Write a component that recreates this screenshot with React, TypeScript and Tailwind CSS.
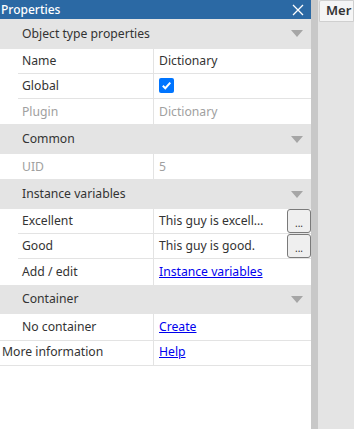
import React from 'react';

const Triangle = () => (
  <svg width="12" height="7" viewBox="0 0 12 7" className="shrink-0">
    <path d="M0 0 H12 L6 7 Z" fill="#a6a6a6" />
  </svg>
);

const Header: React.FC<{ title: string }> = ({ title }) => (
  <div className="flex h-[29.5px] items-center justify-between bg-[#e4e4e4] pl-[22px] pr-[8px] text-[#333]">
    <span>{title}</span>
    <Triangle />
  </div>
);

const Row: React.FC<{ label: string; children?: React.ReactNode; muted?: boolean; last?: boolean }> = ({ label, children, muted, last }) => (
  <div className={`ml-[18px] flex h-[25.33px] bg-white ${last ? '' : 'border-b border-[#e3e3e3]'}`}>
    <div className={`flex w-[136px] shrink-0 items-center border-r border-[#e3e3e3] pl-[4px] ${muted ? 'text-[#a0a0a0]' : 'text-[#333]'}`}>
      {label}
    </div>
    <div className={`flex min-w-0 flex-1 items-center pl-[5px] ${muted ? 'text-[#a0a0a0]' : 'text-[#333]'}`}>
      {children}
    </div>
  </div>
);

const DotsButton = () => (
  <button className="ml-auto flex h-[24px] w-[24px] shrink-0 items-end justify-center rounded-[3px] border border-[#7a7a7a] bg-[#efefef] pb-[4px] text-[10px] leading-none text-[#333]">
    ...
  </button>
);

const Link: React.FC<{ children: React.ReactNode }> = ({ children }) => (
  <a href="#" className="text-[#0000ee] underline">{children}</a>
);

export default function App() {
  return (
    <div className="flex h-[429px] w-[354px] overflow-hidden bg-[#e4e4e4] text-[12.2px] font-['Noto_Sans',sans-serif]">
      <div className="flex w-[311px] shrink-0 flex-col bg-white">
        <div className="flex h-[19px] items-center justify-between bg-[#2b69a4] pl-[1px] pr-[7px] text-white">
          <span className="text-[12px] font-medium leading-none">Properties</span>
          <svg width="12" height="12" viewBox="0 0 12 12">
            <path d="M1 1 L11 11 M11 1 L1 11" stroke="white" strokeWidth="1.3" />
          </svg>
        </div>

        <Header title="Object type properties" />
        <Row label="Name">Dictionary</Row>
        <Row label="Global">
          <span className="flex h-[15px] w-[15px] items-center justify-center rounded-[2px] bg-[#0075ff]">
            <svg width="11" height="11" viewBox="0 0 11 11">
              <path d="M1.8 5.8 L4.3 8.2 L9.3 2.6" fill="none" stroke="white" strokeWidth="2" />
            </svg>
          </span>
        </Row>
        <Row label="Plugin" muted last>Dictionary</Row>

        <Header title="Common" />
        <Row label="UID" muted last>5</Row>

        <Header title="Instance variables" />
        <Row label="Excellent">
          <span className="whitespace-nowrap">This guy is excell…</span>
          <DotsButton />
        </Row>
        <Row label="Good">
          <span className="whitespace-nowrap">This guy is good.</span>
          <DotsButton />
        </Row>
        <Row label="Add / edit" last>
          <Link>Instance variables</Link>
        </Row>

        <Header title="Container" />
        <Row label="No container" last>
          <Link>Create</Link>
        </Row>

        <div className="flex h-[26px] border-y border-[#e3e3e3] bg-white">
          <div className="flex w-[154px] shrink-0 items-center border-r border-[#e3e3e3] pl-[2px] text-[#333]">
            More information
          </div>
          <div className="flex flex-1 items-center pl-[5px]">
            <Link>Help</Link>
          </div>
        </div>
      </div>

      <div className="w-[7px] shrink-0 bg-[#c8c8c8]" />

      <div className="flex-1 pl-[1px]">
        <div className="flex h-[22px] items-center rounded-tl-[2px] border border-[#cfcfcf] bg-[#f5f5f5] pl-[6px] text-[13px] font-semibold text-[#333]">
          Mer
        </div>
      </div>
    </div>
  );
}
